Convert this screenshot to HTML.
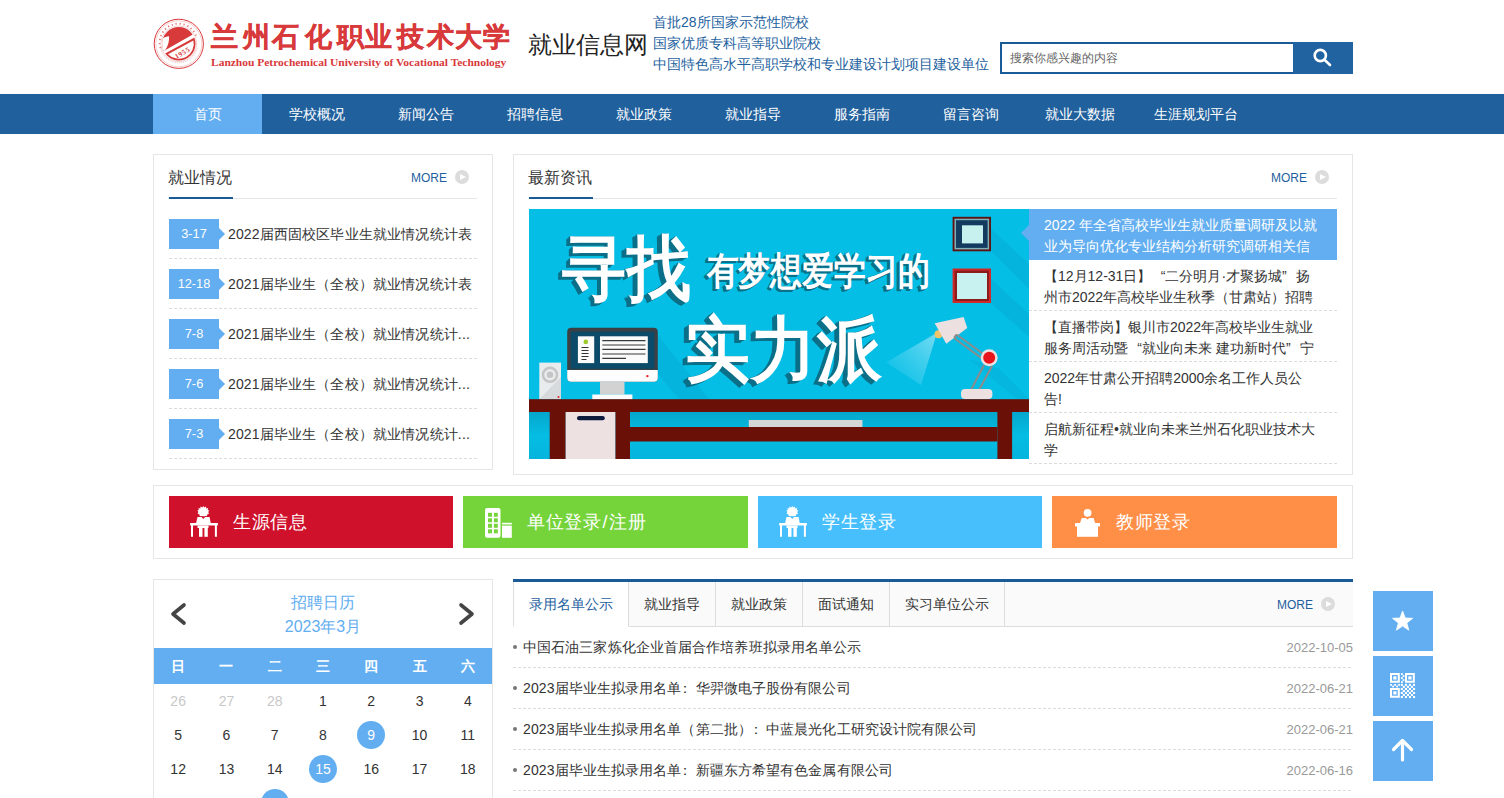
<!DOCTYPE html>
<html><head><meta charset="utf-8">
<style>
*{margin:0;padding:0;box-sizing:border-box}
html,body{width:1504px;height:798px;overflow:hidden;background:#fff}
body{font-family:"Liberation Sans",sans-serif;color:#333;position:relative}
.a{position:absolute;white-space:nowrap}
/* header */
.cal{top:20px;width:27px;font-size:27px;font-weight:bold;color:#d8393b;line-height:34px;-webkit-text-stroke:0.4px #d8393b}
#eng{left:211px;top:55.5px;font-family:"Liberation Serif",serif;font-weight:bold;font-size:10.8px;color:#d8393b;line-height:13px;transform:scaleX(1.063);transform-origin:0 0}
#site{left:528px;top:30px;font-size:24px;color:#222;line-height:30px}
.tag{left:653px;font-size:14px;color:#1e5f9e;line-height:18px}
#search{left:1000px;top:42px;width:353px;height:32px;border:2px solid #1a5a96;background:#fff}
#search span{position:absolute;left:8px;top:6px;font-size:12px;color:#666;line-height:16px}
#sbtn{position:absolute;left:291px;top:-2px;width:60px;height:32px;background:#2163a0}
/* nav */
#nav{left:0;top:94px;width:1504px;height:40px;background:#1f609d}
#nav div{position:absolute;top:0;height:40px;line-height:40px;text-align:center;color:#fff;font-size:14px}
#nav .on{background:#62aef0}
/* boxes */
.box{position:absolute;border:1px solid #e6e6e6;background:#fff}
.ttl{position:absolute;font-size:16px;color:#333;line-height:20px}
.uline{position:absolute;height:2px;background:#1a5a96}
.hline{position:absolute;height:1px;background:#e6e6e6}
.more{position:absolute;font-size:12px;color:#1e5f9e;line-height:14px}
.mc{position:absolute;width:14px;height:14px;border-radius:50%;background:#dcdcdc}
.mc:after{content:"";position:absolute;left:5px;top:3.5px;border-left:6px solid #fff;border-top:3.5px solid transparent;border-bottom:3.5px solid transparent}
.dash{position:absolute;height:1px;background:repeating-linear-gradient(90deg,#dcdcdc 0 3px,transparent 3px 5px)}
.badge{position:absolute;width:50px;height:30px;background:#62aef0;color:#fff;font-size:12.8px;line-height:30px;text-align:center}
.badge:after{content:"";position:absolute;left:50px;top:9px;border-left:6px solid #62aef0;border-top:6px solid transparent;border-bottom:6px solid transparent}
.jt{position:absolute;font-size:14px;color:#333;line-height:20px;letter-spacing:0.15px}
.nw{position:absolute;left:1029px;width:308px;height:51px;padding:6px 15px 0 15px;font-size:14px;line-height:21px;color:#333;overflow:hidden;white-space:normal}
.nw p{width:274.5px;height:42px;overflow:hidden;word-break:break-all}
.ql{display:inline-block;width:14px;text-align:right;font-style:normal}
.qr{display:inline-block;width:14px;text-align:left;font-style:normal}
.nw.on{background:#62aef0;color:#fff;overflow:visible;z-index:3}
.nw.on:before{content:"";position:absolute;left:-8px;top:16px;border-right:8px solid #62aef0;border-top:8.5px solid transparent;border-bottom:8.5px solid transparent}
.btn{position:absolute;top:496px;height:52px;color:#fff;font-size:18px;line-height:24px;letter-spacing:0.6px}
.btn span{position:absolute;top:13px}
.btn svg{position:absolute}
/* calendar */
.wk{position:absolute;top:648px;left:154px;width:338px;height:36px;background:#62aef0}
.wk div,.dr div{position:absolute;width:48.29px;text-align:center}
.wk div{top:0;line-height:36px;color:#fff;font-weight:bold;font-size:14px}
.dr div{font-size:14px;color:#333;line-height:34px;height:34px}
.dr .g{color:#c8c8c8}
.dr .c{color:#fff}
.dr .c:before{content:"";position:absolute;left:10.14px;top:3px;width:28px;height:28px;border-radius:50%;background:#62aef0}
.dr div span{position:relative}
/* tabs */
.tab{position:absolute;top:582px;height:45px;line-height:44px;font-size:14px;color:#333;background:#fafafa;border-right:1px solid #ddd;border-bottom:1px solid #ddd;text-align:center}
.li{position:absolute;left:513px;width:840px;height:41px}
.li .t{position:absolute;left:10px;top:0;line-height:40px;font-size:14px;color:#333;letter-spacing:0.1px}
.li .d{position:absolute;right:0;top:1px;line-height:40px;font-size:13px;color:#999}
.li:before{content:"";position:absolute;left:0;top:18px;width:4px;height:4px;border-radius:50%;background:#777}
.li:after{content:"";position:absolute;left:0;bottom:0;width:840px;height:1px;background:repeating-linear-gradient(90deg,#dcdcdc 0 3px,transparent 3px 5px)}
.fl{position:absolute;left:1373px;width:60px;height:60px;background:#62aef0}
.fl svg{display:block}
.cl{font-style:normal;position:relative;left:-3px}
</style></head><body>

<!-- HEADER -->
<svg class="a" style="left:152px;top:17px" width="54" height="54" viewBox="0 0 54 54">
 <defs><clipPath id="disc"><circle cx="26.8" cy="26.8" r="16.7"/></clipPath></defs>
 <circle cx="26.8" cy="26.8" r="24.6" fill="none" stroke="#d8393b" stroke-width="1"/>
 <circle cx="26.8" cy="26.8" r="23" fill="none" stroke="#eba0a1" stroke-width="0.5"/>
 <path d="M8.5,31 A18.8,18.8 0 0 1 44.5,20" fill="none" stroke="#d8393b" stroke-width="1.8" stroke-dasharray="1.2 2.8" opacity="0.7"/>
 <path d="M45.2,31 A18.8,18.8 0 0 1 8.5,31" fill="none" stroke="#e58a8b" stroke-width="1" stroke-dasharray="0.8 1.2" opacity="0.6"/>
 <circle cx="26.8" cy="26.8" r="17.8" fill="none" stroke="#eba0a1" stroke-width="0.5"/>
 <g clip-path="url(#disc)">
  <polygon points="0,0 54,0 54,4 39.9,18 13.1,33.35 0,41" fill="#d8393b"/>
  <path d="M0,21.1 L11.35,21.1 Q14,19.5 17.05,19.3 Q17.5,27 13.1,33.35 L0,40 Z" fill="#fff"/>
  <polygon points="0,54 54,54 54,13 41.6,21.1 14,36 0,44" fill="#d8393b"/>
 </g>
 <path d="M16,37.2 L41.43,23.47 A15,15 0 0 1 16,37.2 Z" fill="#fff"/>
 <text x="0" y="0" font-size="7" fill="#d8393b" font-weight="bold" transform="translate(24.5,42) rotate(-30)" font-family="Liberation Serif" letter-spacing="0.6">1955</text>
</svg>
<div class="a cal" style="left:210.5px">兰</div><div class="a cal" style="left:242.5px">州</div><div class="a cal" style="left:272.0px">石</div><div class="a cal" style="left:305.0px">化</div><div class="a cal" style="left:337.0px">职</div><div class="a cal" style="left:364.5px">业</div><div class="a cal" style="left:396.5px">技</div><div class="a cal" style="left:426.5px">术</div><div class="a cal" style="left:454.5px">大</div><div class="a cal" style="left:482.5px">学</div>
<div class="a" id="eng">Lanzhou Petrochemical University of Vocational Technology</div>
<div class="a" id="site">就业信息网</div>
<div class="a tag" style="top:13px">首批28所国家示范性院校</div>
<div class="a tag" style="top:34px">国家优质专科高等职业院校</div>
<div class="a tag" style="top:55px">中国特色高水平高职学校和专业建设计划项目建设单位</div>
<div class="a" id="search"><span>搜索你感兴趣的内容</span>
 <div id="sbtn"><svg width="60" height="32" viewBox="0 0 60 32"><circle cx="27.3" cy="13.5" r="5.6" fill="none" stroke="#fff" stroke-width="2.6"/><line x1="31.5" y1="17.8" x2="37" y2="23" stroke="#fff" stroke-width="2.6" stroke-linecap="round"/></svg></div>
</div>

<!-- NAV -->
<div class="a" id="nav">
 <div class="on" style="left:153px;width:109px">首页</div>
 <div style="left:262px;width:109px">学校概况</div>
 <div style="left:371px;width:109px">新闻公告</div>
 <div style="left:480px;width:109px">招聘信息</div>
 <div style="left:589px;width:109px">就业政策</div>
 <div style="left:698px;width:109px">就业指导</div>
 <div style="left:807px;width:109px">服务指南</div>
 <div style="left:916px;width:109px">留言咨询</div>
 <div style="left:1025px;width:109px">就业大数据</div>
 <div style="left:1134px;width:124px">生涯规划平台</div>
</div>

<!-- LEFT BOX -->
<div class="box" style="left:153px;top:154px;width:340px;height:316px"></div>
<div class="ttl" style="left:168px;top:168px">就业情况</div>
<div class="hline" style="left:168px;top:198px;width:309px"></div>
<div class="uline" style="left:169px;top:197px;width:64px"></div>
<div class="more" style="left:411px;top:171px">MORE</div>
<div class="mc" style="left:455px;top:170px"></div>

<div class="badge" style="left:169px;top:219px">3-17</div><div class="jt" style="left:228px;top:224px">2022届西固校区毕业生就业情况统计表</div><div class="dash" style="left:169px;top:258px;width:308px"></div>
<div class="badge" style="left:169px;top:269px">12-18</div><div class="jt" style="left:228px;top:274px">2021届毕业生（全校）就业情况统计表</div><div class="dash" style="left:169px;top:308px;width:308px"></div>
<div class="badge" style="left:169px;top:319px">7-8</div><div class="jt" style="left:228px;top:324px">2021届毕业生（全校）就业情况统计...</div><div class="dash" style="left:169px;top:358px;width:308px"></div>
<div class="badge" style="left:169px;top:369px">7-6</div><div class="jt" style="left:228px;top:374px">2021届毕业生（全校）就业情况统计...</div><div class="dash" style="left:169px;top:408px;width:308px"></div>
<div class="badge" style="left:169px;top:419px">7-3</div><div class="jt" style="left:228px;top:424px">2021届毕业生（全校）就业情况统计...</div><div class="dash" style="left:169px;top:458px;width:308px"></div>

<!-- RIGHT BOX -->
<div class="box" style="left:513px;top:154px;width:840px;height:321px"></div>
<div class="ttl" style="left:528px;top:168px">最新资讯</div>
<div class="hline" style="left:529px;top:198px;width:808px"></div>
<div class="uline" style="left:529px;top:197px;width:64px"></div>
<div class="more" style="left:1271px;top:171px">MORE</div>
<div class="mc" style="left:1315px;top:170px"></div>

<div class="nw on" style="top:209px"><p>2022 年全省高校毕业生就业质量调研及以就业为导向优化专业结构分析研究调研相关信息</p></div>
<div class="nw" style="top:260px"><p>【12月12-31日】<i class="ql">“</i>二分明月·才聚扬城<i class="qr">”</i>扬州市2022年高校毕业生秋季（甘肃站）招聘会</p></div><div class="dash" style="left:1029px;top:310px;width:308px"></div>
<div class="nw" style="top:311px"><p>【直播带岗】银川市2022年高校毕业生就业服务周活动暨<i class="ql">“</i>就业向未来 建功新时代<i class="qr">”</i>宁夏</p></div><div class="dash" style="left:1029px;top:361px;width:308px"></div>
<div class="nw" style="top:362px"><p>2022年甘肃公开招聘2000余名工作人员公告!</p></div><div class="dash" style="left:1029px;top:412px;width:308px"></div>
<div class="nw" style="top:413px"><p>启航新征程•就业向未来兰州石化职业技术大学</p></div><div class="dash" style="left:1029px;top:463px;width:308px"></div>
<div class="a" id="banner" style="left:529px;top:209px;width:500px;height:250px;overflow:hidden">
<svg width="500" height="250" viewBox="0 0 500 250">
 <defs>
  <linearGradient id="lc" x1="1" y1="0" x2="0" y2="1"><stop offset="0" stop-color="#d8f6ff" stop-opacity="0.9"/><stop offset="1" stop-color="#9ee6f8" stop-opacity="0"/></linearGradient>
  <linearGradient id="ug" x1="0" y1="0" x2="0" y2="1"><stop offset="0" stop-color="#05a6cc"/><stop offset="0.5" stop-color="#05bde3"/><stop offset="1" stop-color="#05b4dc"/></linearGradient>
 </defs>
 <rect width="500" height="250" fill="#04bee6"/>
 <!-- long shadows -->
 <polygon points="128,125 180,190 150,190 95,125" fill="#05aed6" opacity="0.6"/>
 <polygon points="462,20 500,55 500,80 462,42" fill="#05aed6" opacity="0.6"/>
 <polygon points="462,70 500,105 500,128 462,94" fill="#05aed6" opacity="0.6"/>
 <polygon points="440,150 500,200 500,190 470,160" fill="#05aed6" opacity="0.5"/>
 <rect x="0" y="203" width="500" height="47" fill="url(#ug)"/>
 <!-- frames -->
 <rect x="423.6" y="7.8" width="38.4" height="34.5" fill="#5c1412"/>
 <rect x="425.5" y="9.7" width="34.6" height="30.7" fill="#7fb0b8"/>
 <rect x="427" y="11.2" width="31.6" height="27.7" fill="#123b5f"/>
 <rect x="433" y="16.3" width="21" height="18.1" fill="#c6f1ee"/>
 <rect x="423.6" y="59.5" width="38.4" height="34.5" fill="#d3282a"/>
 <rect x="425.6" y="61.5" width="34.4" height="30.5" fill="#8b1c1c"/>
 <rect x="428" y="64" width="30" height="26" fill="#c8f2ef"/>
 <!-- lamp -->
 <polygon points="408,123.7 357,153.5 392,176" fill="url(#lc)" opacity="0.6"/>
 <circle cx="409.5" cy="125.3" r="4" fill="#f2c46a"/>
 <polygon points="405.7,114.3 434.6,108 438.3,119 417.3,134.7" fill="#ece0e1"/>
 <path d="M428,128.5 L456,149" stroke="#8c8c8c" stroke-width="6.4" stroke-linecap="round" fill="none"/><path d="M428,128.5 L456,149" stroke="#04bee6" stroke-width="2.6" stroke-linecap="round" fill="none"/>
 <path d="M455,156 L442,181 M463,157 L450,181" stroke="#8c8c8c" stroke-width="2" fill="none"/>
 <circle cx="460.2" cy="148.8" r="8.5" fill="#ece0e1"/>
 <circle cx="460.2" cy="148.8" r="6" fill="#e8141b"/>
 <rect x="432" y="180" width="31.4" height="10" rx="4" fill="#ece0e1"/>
 <!-- speaker -->
 <rect x="10.3" y="153.6" width="21.7" height="36.6" fill="#e9eced"/>
 <polygon points="10.3,190 32,168 32,190" fill="#d6dadc"/>
 <circle cx="21" cy="165.8" r="7" fill="none" stroke="#c5c5c5" stroke-width="2.5"/>
 <circle cx="21" cy="165.8" r="3.2" fill="#c5c5c5"/>
 <circle cx="29.5" cy="188" r="1" fill="#e52424"/>
 <!-- monitor -->
 <rect x="38.2" y="118.8" width="90.6" height="54" rx="4" fill="#3b4045"/>
 <rect x="41.7" y="122.6" width="83.7" height="37.2" fill="#0b4a68"/>
 <path d="M38.2,161 H128.8 V168.7 Q128.8,172.7 124.8,172.7 H42.2 Q38.2,172.7 38.2,168.7 Z" fill="#fdfdfd"/>
 <circle cx="118.4" cy="167.1" r="1.2" fill="#e52424"/>
 <rect x="71" y="172.7" width="24.5" height="12.8" fill="#d2d2d2"/>
 <rect x="63.3" y="185.5" width="40.1" height="5" fill="#fbfbfb"/>
 <rect x="48.9" y="127.3" width="16.3" height="26.8" fill="#fbfbfb"/>
 <circle cx="56.8" cy="132.9" r="2.3" fill="#9ccb2c"/>
 <path d="M52.5,138.5 H59.5 M52.5,141.5 H59.5 M52.5,144.5 H59.5 M52.5,147.5 H59.5 M52.5,150.5 H57.5" stroke="#333" stroke-width="1.1"/>
 <rect x="71" y="127.3" width="47.8" height="26.8" fill="#fbfbfb"/>
 <path d="M73.3,131.6 H116.5 M73.3,136 H116.5 M73.3,140.4 H116.5 M73.3,145 H116.5 M73.3,149.4 H97" stroke="#3a3a3a" stroke-width="1.2"/>
 <!-- desk -->
 <rect x="0" y="190.2" width="500" height="12.8" fill="#6a1007"/>
 <rect x="20.7" y="203" width="16" height="47" fill="#6a1007"/>
 <rect x="36.7" y="203" width="49.8" height="47" fill="#ede1e2"/>
 <rect x="48" y="207" width="27.8" height="4.3" rx="2.1" fill="#0c1a3c"/>
 <rect x="86.5" y="203" width="14.5" height="47" fill="#6a1007"/>
 <rect x="101" y="218" width="367.4" height="14.5" fill="#6a1007"/>
 <rect x="468.4" y="203" width="14.7" height="47" fill="#6a1007"/>
 <rect x="219.8" y="211" width="113.6" height="7" fill="#d6d6d6"/>
 <!-- texts -->
 <g font-family="Liberation Sans" font-weight="bold">
  <g transform="translate(29,83.7) scale(0.9,1)"><text x="0.00" y="3.00" font-size="71" fill="#0b6f88">寻找</text><text x="1.25" y="2.00" font-size="71" fill="#0b6f88">寻找</text><text x="2.50" y="1.00" font-size="71" fill="#0b6f88">寻找</text><text x="3.75" y="0.00" font-size="71" fill="#0b6f88">寻找</text><text x="5.00" y="0" font-size="71" fill="#fff">寻找</text></g>
  <g transform="translate(175,75.3) scale(0.84,1)"><text x="0.00" y="2.00" font-size="38.4" fill="#0b6f88">有梦想爱学习的</text><text x="0.75" y="1.33" font-size="38.4" fill="#0b6f88">有梦想爱学习的</text><text x="1.50" y="0.67" font-size="38.4" fill="#0b6f88">有梦想爱学习的</text><text x="2.25" y="0.00" font-size="38.4" fill="#0b6f88">有梦想爱学习的</text><text x="3.00" y="0" font-size="38.4" fill="#fff">有梦想爱学习的</text></g>
  <g transform="translate(151,165.2) scale(0.917,1)"><text x="0.00" y="3.00" font-size="71.4" fill="#0b6f88">实力派</text><text x="1.38" y="2.00" font-size="71.4" fill="#0b6f88">实力派</text><text x="2.75" y="1.00" font-size="71.4" fill="#0b6f88">实力派</text><text x="4.12" y="0.00" font-size="71.4" fill="#0b6f88">实力派</text><text x="5.50" y="0" font-size="71.4" fill="#fff">实力派</text></g>
   </g>
</svg></div>

<!-- BUTTON STRIP -->
<div class="box" style="left:153px;top:485px;width:1200px;height:74px"></div>

<div class="btn" style="left:169px;width:284px;background:#cf112c"><svg style="left:15px;top:6px" width="40" height="40" viewBox="0 0 40 40" fill="#fff">
 <path d="M19.3,4 L20.3,5.6 L22,4.4 L22.3,6.4 L24.2,6 L23.7,7.9 L25.3,8.6 L24.2,10 L25,11.8 L23.4,12.2 L22.8,14 L19.3,14.3 L15.8,14 L15.2,12.2 L13.6,11.8 L14.4,10 L13.3,8.6 L14.9,7.9 L14.4,6 L16.3,6.4 L16.6,4.4 L18.3,5.6 Z"/>
 <path d="M13.5,15 L17.5,15 L19.3,17 L21.1,15 L25.6,15 L26.8,21.5 L12,21.5 Z"/>
 <rect x="6" y="21" width="28" height="2.6" rx="0.8"/>
 <rect x="7" y="23" width="2" height="11.8"/>
 <rect x="30.9" y="23" width="2" height="11.8"/>
 <rect x="13.5" y="23.5" width="11" height="2.5"/>
 <rect x="15" y="25" width="3.5" height="9.8"/>
 <rect x="20.4" y="25" width="3.4" height="9.8"/>
</svg><span style="left:64px;top:14px">生源信息</span></div>
<div class="btn" style="left:463px;width:285px;background:#76d43b"><svg style="left:17px;top:6px" width="40" height="40" viewBox="0 0 40 40">
 <rect x="5" y="6" width="15.5" height="29.8" rx="2" fill="#fff"/>
 <g fill="#76d43b"><rect x="8" y="10.8" width="4" height="4"/><rect x="13.9" y="10.8" width="3.9" height="4"/><rect x="8" y="16.3" width="4" height="4"/><rect x="13.9" y="16.3" width="3.9" height="4"/><rect x="8" y="21.8" width="4" height="4"/><rect x="13.9" y="21.8" width="3.9" height="4"/><rect x="8" y="27.3" width="4" height="4"/><rect x="13.9" y="27.3" width="3.9" height="4"/></g>
 <rect x="22" y="20.8" width="9.8" height="1.2" fill="#fff"/>
 <rect x="22" y="22" width="9.8" height="1.8" fill="#fff" opacity="0.45"/>
 <rect x="22" y="24" width="9.8" height="11.8" fill="#fff"/>
</svg><span style="left:64px;top:14px">单位登录<i style="font-style:normal;padding:0 1px 0 1px">/</i>注册</span></div>
<div class="btn" style="left:758px;width:284px;background:#47bffd"><svg style="left:15px;top:6px" width="40" height="40" viewBox="0 0 40 40" fill="#fff">
 <path d="M19.3,4 L20.3,5.6 L22,4.4 L22.3,6.4 L24.2,6 L23.7,7.9 L25.3,8.6 L24.2,10 L25,11.8 L23.4,12.2 L22.8,14 L19.3,14.3 L15.8,14 L15.2,12.2 L13.6,11.8 L14.4,10 L13.3,8.6 L14.9,7.9 L14.4,6 L16.3,6.4 L16.6,4.4 L18.3,5.6 Z"/>
 <path d="M13.5,15 L17.5,15 L19.3,17 L21.1,15 L25.6,15 L26.8,21.5 L12,21.5 Z"/>
 <rect x="6" y="21" width="28" height="2.6" rx="0.8"/>
 <rect x="7" y="23" width="2" height="11.8"/>
 <rect x="30.9" y="23" width="2" height="11.8"/>
 <rect x="13.5" y="23.5" width="11" height="2.5"/>
 <rect x="15" y="25" width="3.5" height="9.8"/>
 <rect x="20.4" y="25" width="3.4" height="9.8"/>
</svg><span style="left:64px;top:14px">学生登录</span></div>
<div class="btn" style="left:1052px;width:285px;background:#ff8f47"><svg style="left:16px;top:6px" width="40" height="40" viewBox="0 0 40 40" fill="#fff">
 <circle cx="19.6" cy="10.8" r="3.9"/>
 <path d="M13.8,16 L17.8,16 L19.6,17.6 L21.4,16 L25.6,16 L27.3,21.5 L11.8,21.5 Z"/>
 <rect x="7" y="21" width="25" height="3.6" rx="0.6"/>
 <rect x="9" y="24" width="21" height="10.8"/>
</svg><span style="left:64px;top:14px">教师登录</span></div>

<!-- CALENDAR -->
<div class="box" style="left:153px;top:579px;width:340px;height:240px"></div>

<svg class="a" style="left:166px;top:599px" width="26" height="32"><polyline points="18,6 7,15 18,24" fill="none" stroke="#444" stroke-width="3.6" stroke-linecap="round" stroke-linejoin="round"/></svg>
<svg class="a" style="left:454px;top:599px" width="26" height="32"><polyline points="7,6 18,15 7,24" fill="none" stroke="#444" stroke-width="3.6" stroke-linecap="round" stroke-linejoin="round"/></svg>
<div class="a" style="left:154px;top:591px;width:338px;text-align:center;font-size:16px;line-height:24px;color:#62aef0">招聘日历<br>2023年3月</div>
<div class="wk"><div style="left:0">日</div><div style="left:48.29px">一</div><div style="left:96.57px">二</div><div style="left:144.86px">三</div><div style="left:193.14px">四</div><div style="left:241.43px">五</div><div style="left:289.71px">六</div></div>
<div class="dr a" style="left:154px;top:684px;width:338px;height:34px"><div class="g" style="left:0.00px"><span>26</span></div><div class="g" style="left:48.29px"><span>27</span></div><div class="g" style="left:96.57px"><span>28</span></div><div class="" style="left:144.86px"><span>1</span></div><div class="" style="left:193.14px"><span>2</span></div><div class="" style="left:241.43px"><span>3</span></div><div class="" style="left:289.71px"><span>4</span></div></div>
<div class="dr a" style="left:154px;top:718px;width:338px;height:34px"><div class="" style="left:0.00px"><span>5</span></div><div class="" style="left:48.29px"><span>6</span></div><div class="" style="left:96.57px"><span>7</span></div><div class="" style="left:144.86px"><span>8</span></div><div class="c" style="left:193.14px"><span>9</span></div><div class="" style="left:241.43px"><span>10</span></div><div class="" style="left:289.71px"><span>11</span></div></div>
<div class="dr a" style="left:154px;top:752px;width:338px;height:34px"><div class="" style="left:0.00px"><span>12</span></div><div class="" style="left:48.29px"><span>13</span></div><div class="" style="left:96.57px"><span>14</span></div><div class="c" style="left:144.86px"><span>15</span></div><div class="" style="left:193.14px"><span>16</span></div><div class="" style="left:241.43px"><span>17</span></div><div class="" style="left:289.71px"><span>18</span></div></div>
<div class="dr a" style="left:154px;top:786px;width:338px;height:34px"><div class="" style="left:0.00px"><span>19</span></div><div class="" style="left:48.29px"><span>20</span></div><div class="c" style="left:96.57px"><span>21</span></div><div class="" style="left:144.86px"><span>22</span></div><div class="" style="left:193.14px"><span>23</span></div><div class="" style="left:241.43px"><span>24</span></div><div class="" style="left:289.71px"><span>25</span></div></div>

<!-- TABS -->
<div class="a" style="left:513px;top:579px;width:840px;height:3px;background:#1a5a96"></div>
<div class="a" style="left:513px;top:582px;width:840px;height:45px;background:#fafafa;border-bottom:1px solid #ddd"></div>

<div class="tab" style="left:513px;width:116px;background:#fff;color:#1e5f9e;border-left:1px solid #ddd;border-bottom-color:#fff">录用名单公示</div>
<div class="tab" style="left:629px;width:87px">就业指导</div>
<div class="tab" style="left:716px;width:87px">就业政策</div>
<div class="tab" style="left:803px;width:87px">面试通知</div>
<div class="tab" style="left:890px;width:115px">实习单位公示</div>
<div class="more" style="left:1277px;top:598px">MORE</div>
<div class="mc" style="left:1321px;top:597px"></div>
<div class="li" style="top:627px"><div class="t">中国石油三家炼化企业首届合作培养班拟录用名单公示</div><div class="d">2022-10-05</div></div>
<div class="li" style="top:668px"><div class="t">2023届毕业生拟录用名单<i class="cl">：</i>华羿微电子股份有限公司</div><div class="d">2022-06-21</div></div>
<div class="li" style="top:709px"><div class="t">2023届毕业生拟录用名单（第二批）<i class="cl">：</i>中蓝晨光化工研究设计院有限公司</div><div class="d">2022-06-21</div></div>
<div class="li" style="top:750px"><div class="t">2023届毕业生拟录用名单<i class="cl">：</i>新疆东方希望有色金属有限公司</div><div class="d">2022-06-16</div></div>

<!-- FLOAT -->
<div class="fl" style="top:591px"><svg width="60" height="60"><polygon points="29.60,20.00 32.22,27.00 39.68,27.32 33.83,31.98 35.83,39.18 29.60,35.05 23.37,39.18 25.37,31.98 19.52,27.32 26.98,27.00" fill="#fff" stroke="#fff" stroke-width="0.8" stroke-linejoin="round"/></svg></div>
<div class="fl" style="top:656px"><svg width="60" height="60" viewBox="0 0 60 60"><g transform="translate(17,17)" fill="#fff"><path d="M0,0 h9.8 v9.8 h-9.8 Z M2,2 v5.8 h5.8 v-5.8 Z"/><rect x="3.3" y="3.3" width="3.2" height="3.2"/><path d="M15,0 h9.8 v9.8 h-9.8 Z M17,2 v5.8 h5.8 v-5.8 Z"/><rect x="18.3" y="3.3" width="3.2" height="3.2"/><path d="M0,15 h9.8 v9.8 h-9.8 Z M2,17 v5.8 h5.8 v-5.8 Z"/><rect x="3.3" y="18.3" width="3.2" height="3.2"/><rect x="11" y="0.2" width="1.8" height="1.8"/><rect x="12.6" y="2.2" width="1.8" height="1.8"/><rect x="11" y="4.2" width="1.8" height="1.8"/><rect x="12.6" y="6.2" width="1.8" height="1.8"/><rect x="11" y="8.2" width="1.8" height="1.8"/><rect x="0.2" y="11" width="1.8" height="1.8"/><rect x="2.2" y="12.6" width="1.8" height="1.8"/><rect x="4.2" y="11" width="1.8" height="1.8"/><rect x="6.2" y="12.6" width="1.8" height="1.8"/><rect x="8.2" y="11" width="1.8" height="1.8"/><rect x="10.8" y="10.8" width="2.1" height="2.1"/><rect x="14.9" y="10.8" width="2.1" height="2.1"/><rect x="18.9" y="10.8" width="2.1" height="2.1"/><rect x="23.0" y="10.8" width="2.1" height="2.1"/><rect x="12.8" y="12.8" width="2.1" height="2.1"/><rect x="16.9" y="12.8" width="2.1" height="2.1"/><rect x="20.9" y="12.8" width="2.1" height="2.1"/><rect x="10.8" y="14.9" width="2.1" height="2.1"/><rect x="14.9" y="14.9" width="2.1" height="2.1"/><rect x="18.9" y="14.9" width="2.1" height="2.1"/><rect x="23.0" y="14.9" width="2.1" height="2.1"/><rect x="12.8" y="16.9" width="2.1" height="2.1"/><rect x="16.9" y="16.9" width="2.1" height="2.1"/><rect x="20.9" y="16.9" width="2.1" height="2.1"/><rect x="10.8" y="18.9" width="2.1" height="2.1"/><rect x="14.9" y="18.9" width="2.1" height="2.1"/><rect x="18.9" y="18.9" width="2.1" height="2.1"/><rect x="23.0" y="18.9" width="2.1" height="2.1"/><rect x="12.8" y="20.9" width="2.1" height="2.1"/><rect x="16.9" y="20.9" width="2.1" height="2.1"/><rect x="20.9" y="20.9" width="2.1" height="2.1"/><rect x="10.8" y="23.0" width="2.1" height="2.1"/><rect x="14.9" y="23.0" width="2.1" height="2.1"/><rect x="18.9" y="23.0" width="2.1" height="2.1"/><rect x="23.0" y="23.0" width="2.1" height="2.1"/></g></svg></div>
<div class="fl" style="top:721px"><svg width="60" height="60"><path d="M20.5,28.5 L29.5,19.5 L38.5,28.5 M29.5,20 V39" fill="none" stroke="#fff" stroke-width="3.2" stroke-linecap="round" stroke-linejoin="round"/></svg></div>

</body></html>
